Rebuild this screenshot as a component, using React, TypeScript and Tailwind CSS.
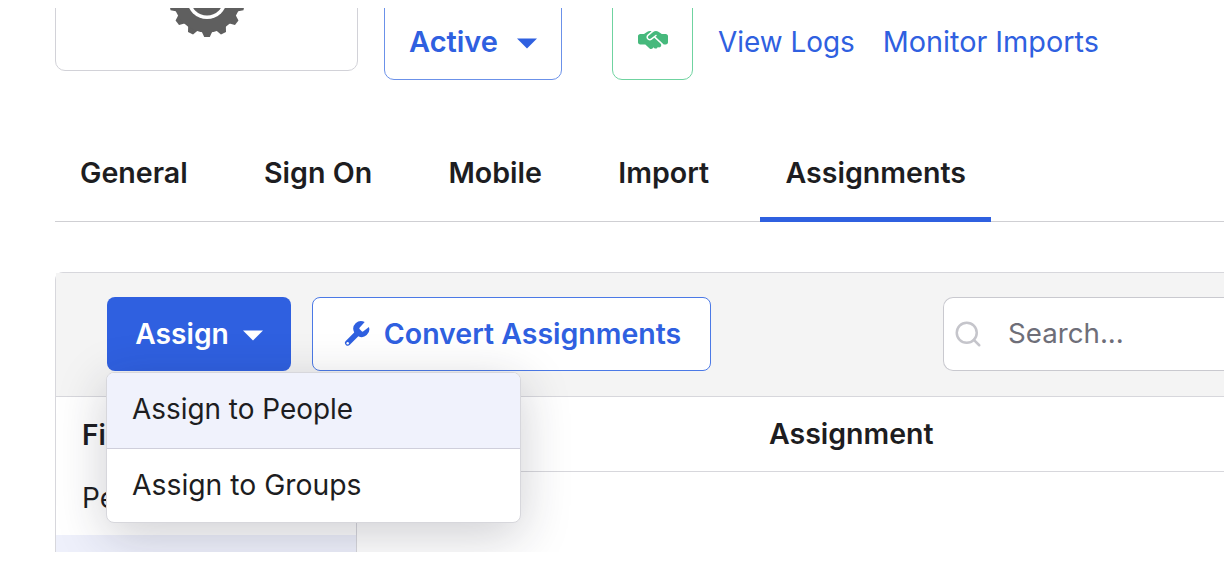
import { FaHandshakeSimple } from 'react-icons/fa6'
import { Search } from 'lucide-react'

const tabs = ['General', 'Sign On', 'Mobile', 'Import', 'Assignments']

function Caret({ className }: { className: string }) {
  return (
    <svg width="20" height="11" viewBox="0 0 20 11" className={className}>
      <path d="M0 0.5h20L10 10.5z" fill="currentColor" />
    </svg>
  )
}

function Gear() {
  const teeth = Array.from({ length: 14 }, (_, i) => (i * 360) / 14)
  return (
    <svg width="84" height="84" viewBox="-42 -42 84 84" className="text-[#5f5f5f]">
      {teeth.map((deg) => (
        <path key={deg} d="M-5.5 -32L-2.8 -38H2.8L5.5 -32z" fill="currentColor" transform={`rotate(${deg})`} />
      ))}
      <circle r="33.5" fill="currentColor" />
      <circle r="20" fill="white" />
      <circle r="16.5" fill="currentColor" />
    </svg>
  )
}

function Wrench() {
  return (
    <svg width="29" height="29" viewBox="0 0 24 24" className="text-[#2f60e0]">
      <path
        d="M14.7 6.3a1 1 0 0 0 0 1.4l1.6 1.6a1 1 0 0 0 1.4 0l4.6-3.6a6.4 6.4 0 0 1-8.8 7.8l-7 7a2.3 2.3 0 0 1-3.4-3.2l7-7a6.4 6.4 0 0 1 8.7-8.6z"
        fill="currentColor"
      />
      <circle cx="4.7" cy="19.3" r="1" fill="white" />
    </svg>
  )
}

export default function App() {
  return (
    <div className="h-[566px] w-[1224px] overflow-hidden bg-white font-['Inter',sans-serif]">
      <div className="mt-[8px] h-[544px] overflow-hidden">
        <div className="-mt-[60px] pl-[55px]">
          <div className="flex items-start">
            <div className="flex h-[123px] w-[303px] items-start justify-center overflow-hidden rounded-[10px] border border-[#d2d2d8] pt-[8px]">
              <Gear />
            </div>
            <button className="ml-[26px] flex h-[132px] w-[178px] items-end justify-center gap-[19px] rounded-[10px] border border-[#6b91e9] pb-[19px] text-[29px] leading-[36px] font-semibold text-[#2f60e0]">
              Active
              <Caret className="mb-[11px]" />
            </button>
            <div className="ml-[50px] flex h-[132px] w-[81px] items-end justify-center rounded-[10px] border border-[#6fd3a0] pb-[24px]">
              <FaHandshakeSimple className="text-[30px] text-[#46b97c]" />
            </div>
            <a className="mt-[76px] ml-[25px] text-[27.9px] leading-[36px] text-[#2f60e0]">View Logs</a>
            <a className="mt-[76px] ml-[28px] text-[28.8px] leading-[36px] text-[#2f60e0]">Monitor Imports</a>
          </div>

          <div className="mt-[50px] flex h-[92px] items-stretch gap-[26.3px] border-b border-[#cfcfd3]">
            {tabs.map((tab) => (
              <div
                key={tab}
                className={`-mb-px flex items-center px-[25px] text-[28.6px] font-semibold text-[#1d1d21] ${
                  tab === 'Assignments' ? 'border-b-[5px] border-[#2f60e0] pb-[1px]' : 'pb-[6px]'
                }`}
              >
                {tab}
              </div>
            ))}
          </div>

          <div className="relative mt-[50px] rounded-tl-[8px] border-t border-l border-[#d7d7dc]">
            <div className="flex h-[124px] items-center border-b border-[#d7d7dc] bg-[#f4f4f4] pb-[2px] pl-[51px]">
              <button className="flex h-[74px] w-[184px] items-center justify-center gap-[14px] rounded-[8px] bg-[#2f60e0] pt-[1px] text-[28.2px] font-semibold text-white">
                Assign
                <Caret className="mt-[2px]" />
              </button>
              <button className="ml-[21px] flex h-[74px] w-[399px] items-center justify-center gap-[13px] rounded-[8px] border border-[#4b79e6] bg-white pt-[1px] text-[28.5px] font-semibold text-[#2f60e0]">
                <Wrench />
                Convert Assignments
              </button>
              <div className="ml-[232px] flex h-[74px] flex-1 items-center rounded-l-[10px] border-y border-l border-[#c9c9cf] bg-white pt-[1px] pl-[9px] text-[27.7px] text-[#6e6e78]">
                <Search size={30} strokeWidth={2} className="text-[#c5c5cb]" />
                <span className="ml-[25px]">Search...</span>
              </div>
            </div>
            <div className="flex h-[160px]">
              <div className="w-[301px] border-r border-[#d7d7dc]">
                <div className="flex h-[75px] items-center pl-[26px] text-[28px] font-semibold text-[#1d1d21]">Filters</div>
                <div className="flex h-[63px] items-center pb-[12px] pl-[26px] text-[28px] text-[#1d1d21]">People</div>
                <div className="h-[22px] bg-[#eef0fb]" />
              </div>
              <div className="flex-1">
                <div className="flex h-[75px] items-center border-b border-[#d7d7dc] pl-[412px] text-[28.5px] font-semibold text-[#1d1d21]">
                  Assignment
                </div>
              </div>
            </div>

            <div className="absolute top-[99px] left-[50px] w-[415px] overflow-hidden rounded-[8px] border border-[#d7d7dc] bg-white shadow-[0_12px_50px_rgba(30,30,50,0.22)]">
              <div className="flex h-[76px] items-center border-b border-[#cfcfdb] bg-[#f0f2fc] pb-[2px] pl-[25px] text-[27.9px] text-[#1d1d21]">Assign to People</div>
              <div className="flex h-[73px] items-center pl-[25px] text-[28.3px] text-[#1d1d21]">Assign to Groups</div>
            </div>
          </div>
        </div>
      </div>
    </div>
  )
}
